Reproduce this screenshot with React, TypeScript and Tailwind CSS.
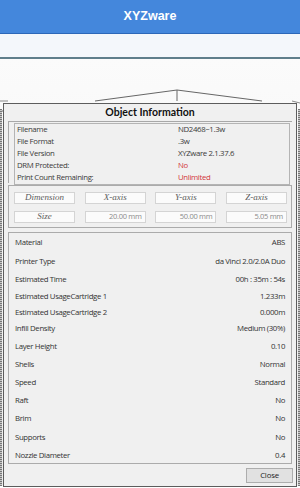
import React from "react";

const info = [
  { label: "Filename", value: "ND2468~1.3w", red: false },
  { label: "File Format", value: ".3w", red: false },
  { label: "File Version", value: "XYZware 2.1.37.6", red: false },
  { label: "DRM Protected:", value: "No", red: true },
  { label: "Print Count Remaining:", value: "Unlimited", red: true },
];

const props = [
  { label: "Material", value: "ABS", h: "h-[18.5px]" },
  { label: "Printer Type", value: "da Vinci 2.0/2.0A Duo", h: "h-[18.5px]" },
  { label: "Estimated Time", value: "00h : 35m : 54s", h: "h-[18px]" },
  { label: "Estimated UsageCartridge 1", value: "1.233m", h: "h-[16px]" },
  { label: "Estimated UsageCartridge 2", value: "0.000m", h: "h-[15px]" },
  { label: "Infill Density", value: "Medium (30%)", h: "h-[17.5px]" },
  { label: "Layer Height", value: "0.10", h: "h-[18.2px]" },
  { label: "Shells", value: "Normal", h: "h-[18.2px]" },
  { label: "Speed", value: "Standard", h: "h-[18.2px]" },
  { label: "Raft", value: "No", h: "h-[18.2px]" },
  { label: "Brim", value: "No", h: "h-[18.2px]" },
  { label: "Supports", value: "No", h: "h-[18.2px]" },
  { label: "Nozzle Diameter", value: "0.4", h: "h-[18.2px]" },
];

function HeadBtn({ children }: { children: React.ReactNode }) {
  return (
    <div className="h-[12px] flex items-center justify-center border border-[#d4d4d4] bg-[#fbfbfb] text-[9px] italic text-[#5c5c5c] [font-family:'Liberation_Serif',serif]">
      {children}
    </div>
  );
}

function ValBox({ children }: { children: React.ReactNode }) {
  return (
    <div className="h-[12px] flex items-center justify-end pr-[3px] border border-[#d4d4d4] bg-[#fbfbfb] text-[7.5px] tracking-[-0.3px] text-[#8a8a8a]">
      {children}
    </div>
  );
}

export default function App() {
  return (
    <div className="relative w-[300px] h-[488px] overflow-hidden bg-white [font-family:'Open_Sans',sans-serif]">
      {/* header */}
      <div className="h-[34px] flex items-center justify-center bg-[#4487dc] border-b border-[#2c67b8]">
        <span className="text-white font-bold text-[12.5px] [font-family:'Liberation_Sans',sans-serif]">XYZware</span>
      </div>
      <div className="h-[25px] bg-[#f4f7fb] border-b-2 border-[#5f7e8b]" />
      <div className="relative h-[427px] bg-gradient-to-b from-[#fbfbfb] to-[#ededed]">
        <svg className="absolute left-0 top-0" width="300" height="60">
          <polyline points="95,42 177,31 262,42" fill="none" stroke="#666" strokeWidth="1" />
          <line x1="177" y1="31" x2="177" y2="42" stroke="#666" strokeWidth="1" />
          <line x1="0" y1="52" x2="3" y2="52" stroke="#666" strokeWidth="1" />
          <line x1="0" y1="42" x2="8" y2="42" stroke="#888" strokeWidth="1" />
          <line x1="292" y1="42" x2="300" y2="44" stroke="#888" strokeWidth="1" />
        </svg>
        <div className="absolute left-0 top-[50px] bottom-0 w-[2px] bg-[repeating-linear-gradient(to_bottom,#777_0px,#777_1px,#c8c8c8_1px,#c8c8c8_2px)]" />
        <div className="absolute right-0 top-[50px] bottom-0 w-[2px] bg-[repeating-linear-gradient(to_bottom,#777_0px,#777_1px,#c8c8c8_1px,#c8c8c8_2px)]" />
      </div>

      {/* dialog */}
      <div className="absolute left-[3px] top-[103px] w-[294px] h-[384px] border border-[#5c5c5c] bg-[#f0f0f0] flex flex-col">
        <div className="h-[17px] flex items-center justify-center">
          <span className="font-bold text-[10.5px] text-[#111] [font-family:'Lato',sans-serif]">Object Information</span>
        </div>
        {/* info panel */}
        <div className="ml-[4px] mr-[4px] h-[62px] border-l border-t border-[#a8a8a8] pl-[5px] pr-[2px] pt-[1px]">
          <div className="border border-[#b4b4b4] bg-[#f0f0f0] px-[2px]">
            {info.map((r) => (
              <div key={r.label} className="h-[12px] flex items-center text-[7.8px] tracking-[-0.35px] leading-none">
                <span className="w-[161px] text-[#3a3a3a]">{r.label}</span>
                <span className={r.red ? "text-[#d2363a]" : "text-[#3a3a3a]"}>{r.value}</span>
              </div>
            ))}
          </div>
        </div>
        {/* dimension box */}
        <div className="mt-[2px] ml-[4px] mr-[4px] h-[43px] border border-[#ababab] pl-[5px] pr-[4px] pt-[6px] grid grid-cols-4 gap-x-[9.7px] gap-y-[7px] content-start">
          <HeadBtn>Dimension</HeadBtn>
          <HeadBtn>X-axis</HeadBtn>
          <HeadBtn>Y-axis</HeadBtn>
          <HeadBtn>Z-axis</HeadBtn>
          <HeadBtn>Size</HeadBtn>
          <ValBox>20.00 mm</ValBox>
          <ValBox>50.00 mm</ValBox>
          <ValBox>5.05 mm</ValBox>
        </div>
        {/* properties */}
        <div className="mt-[4px] ml-[4px] mr-[4px] h-[232px] border border-[#ababab] pt-[1px] px-[6px]">
          {props.map((r) => (
            <div key={r.label} className={`${r.h} flex items-center justify-between text-[7.8px] tracking-[-0.35px] leading-none text-[#333]`}>
              <span>{r.label}</span>
              <span>{r.value}</span>
            </div>
          ))}
        </div>
        <div className="flex justify-end mt-[4px] mr-[3px]">
          <button className="w-[47px] h-[15px] border border-[#adadad] bg-[#e1e1e1] text-[7.8px] tracking-[-0.2px] text-[#222] flex items-center justify-center">
            Close
          </button>
        </div>
      </div>
    </div>
  );
}
